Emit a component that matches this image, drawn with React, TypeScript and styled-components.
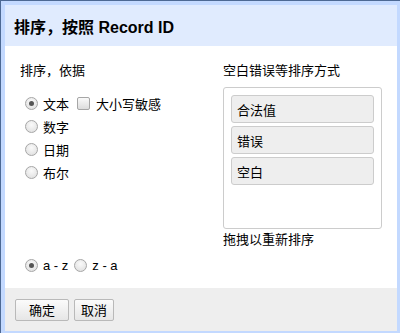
import React, { useState } from "react";
import styled, { createGlobalStyle } from "styled-components";

const GlobalStyle = createGlobalStyle`
  html, body {
    margin: 0;
    padding: 0;
    background: #c3d9ff;
  }
  body {
    font-family: "Liberation Sans", Arial, "Noto Sans CJK SC", sans-serif;
    font-size: 13px;
    color: #000;
  }
`;

const Frame = styled.div`
  width: 400px;
  height: 333px;
  box-sizing: border-box;
  background: #c3d9ff;
  border-top: 1px solid #4d6994;
  border-left: 1px solid #4d6994;
  padding: 4px 3px 2px 4px;
`;

const Dialog = styled.div`
  height: 100%;
  display: flex;
  flex-direction: column;
  background: #fff;
`;

const Header = styled.div`
  height: 41px;
  flex: none;
  display: flex;
  align-items: center;
  padding-left: 9px;
  background: #e0ebfe;
  font-size: 16px;
  font-weight: bold;
`;

const Body = styled.div`
  flex: 1;
  padding: 17px 0 0 15px;
`;

const Columns = styled.div`
  display: grid;
  grid-template-columns: 203px 159px;
`;

const Column = styled.div`
  display: flex;
  flex-direction: column;
`;

const Caption = styled.div`
  line-height: 16px;
`;

const OptionList = styled.div`
  display: flex;
  flex-direction: column;
  gap: 7px;
  margin-top: 16px;
  padding-left: 5px;
`;

const OptionRow = styled.label`
  display: flex;
  align-items: center;
  height: 16px;
  gap: 5px;
`;

const Radio = styled.span<{ checked: boolean }>`
  width: 13px;
  height: 13px;
  box-sizing: border-box;
  border-radius: 50%;
  border: 1px solid #a6a6a6;
  background: radial-gradient(circle at 50% 35%, #fafafa 0%, #dcdcdc 100%);
  display: flex;
  align-items: center;
  justify-content: center;
  flex: none;

  &::after {
    content: "";
    width: 5px;
    height: 5px;
    border-radius: 50%;
    background: ${({ checked }) => (checked ? "#555" : "transparent")};
  }
`;

const Checkbox = styled.span`
  width: 13px;
  height: 13px;
  box-sizing: border-box;
  border: 1px solid #a6a6a6;
  border-radius: 2px;
  background: linear-gradient(#fafafa, #dcdcdc);
  margin-left: 3px;
  margin-right: 1px;
  flex: none;
`;

const DragBox = styled.div`
  margin-top: 8px;
  height: 142px;
  box-sizing: border-box;
  border: 1px solid #ccc;
  border-radius: 3px;
  padding: 7px 7px 0 7px;
  display: flex;
  flex-direction: column;
  gap: 3px;
`;

const DragItem = styled.div`
  height: 28px;
  box-sizing: border-box;
  border: 1px solid #ccc;
  border-radius: 3px;
  background: #eee;
  display: flex;
  align-items: center;
  padding-left: 5px;
  cursor: move;
`;

const Hint = styled.div`
  line-height: 16px;
  margin-top: 3px;
`;

const OrderRow = styled.div`
  display: flex;
  align-items: center;
  gap: 5px;
  margin-top: 9px;
  padding-left: 5px;
  height: 16px;
`;

const OrderOption = styled.label`
  display: flex;
  align-items: center;
  gap: 5px;
  margin-right: 1px;
`;

const Footer = styled.div`
  height: 43px;
  flex: none;
  background: #eee;
  display: flex;
  align-items: center;
  gap: 5px;
  padding: 0 10px;
`;

const Button = styled.button<{ wide?: boolean }>`
  height: 22px;
  width: ${({ wide }) => (wide ? "54px" : "40px")};
  padding: 0;
  border: 1px solid #b9b9b9;
  border-radius: 2px;
  background: linear-gradient(#fbfbfb, #e6e6e6);
  font-family: "Liberation Sans", Arial, "Noto Sans CJK SC", sans-serif;
  font-size: 13px;
  color: #000;
`;

const types = ["文本", "数字", "日期", "布尔"];
const groups = ["合法值", "错误", "空白"];

export default function App() {
  const [type, setType] = useState("文本");
  const [asc, setAsc] = useState(true);

  return (
    <>
      <GlobalStyle />
      <Frame>
        <Dialog>
          <Header>排序，按照 Record ID</Header>
          <Body>
            <Columns>
              <Column>
                <Caption>排序，依据</Caption>
                <OptionList>
                  {types.map((t) => (
                    <OptionRow key={t} onClick={() => setType(t)}>
                      <Radio checked={type === t} />
                      {t}
                      {t === "文本" && (
                        <>
                          <Checkbox />
                          大小写敏感
                        </>
                      )}
                    </OptionRow>
                  ))}
                </OptionList>
              </Column>
              <Column>
                <Caption>空白错误等排序方式</Caption>
                <DragBox>
                  {groups.map((g) => (
                    <DragItem key={g}>{g}</DragItem>
                  ))}
                </DragBox>
                <Hint>拖拽以重新排序</Hint>
              </Column>
            </Columns>
            <OrderRow>
              <OrderOption onClick={() => setAsc(true)}>
                <Radio checked={asc} />a - z
              </OrderOption>
              <OrderOption onClick={() => setAsc(false)}>
                <Radio checked={!asc} />z - a
              </OrderOption>
            </OrderRow>
          </Body>
          <Footer>
            <Button wide>确定</Button>
            <Button>取消</Button>
          </Footer>
        </Dialog>
      </Frame>
    </>
  );
}
